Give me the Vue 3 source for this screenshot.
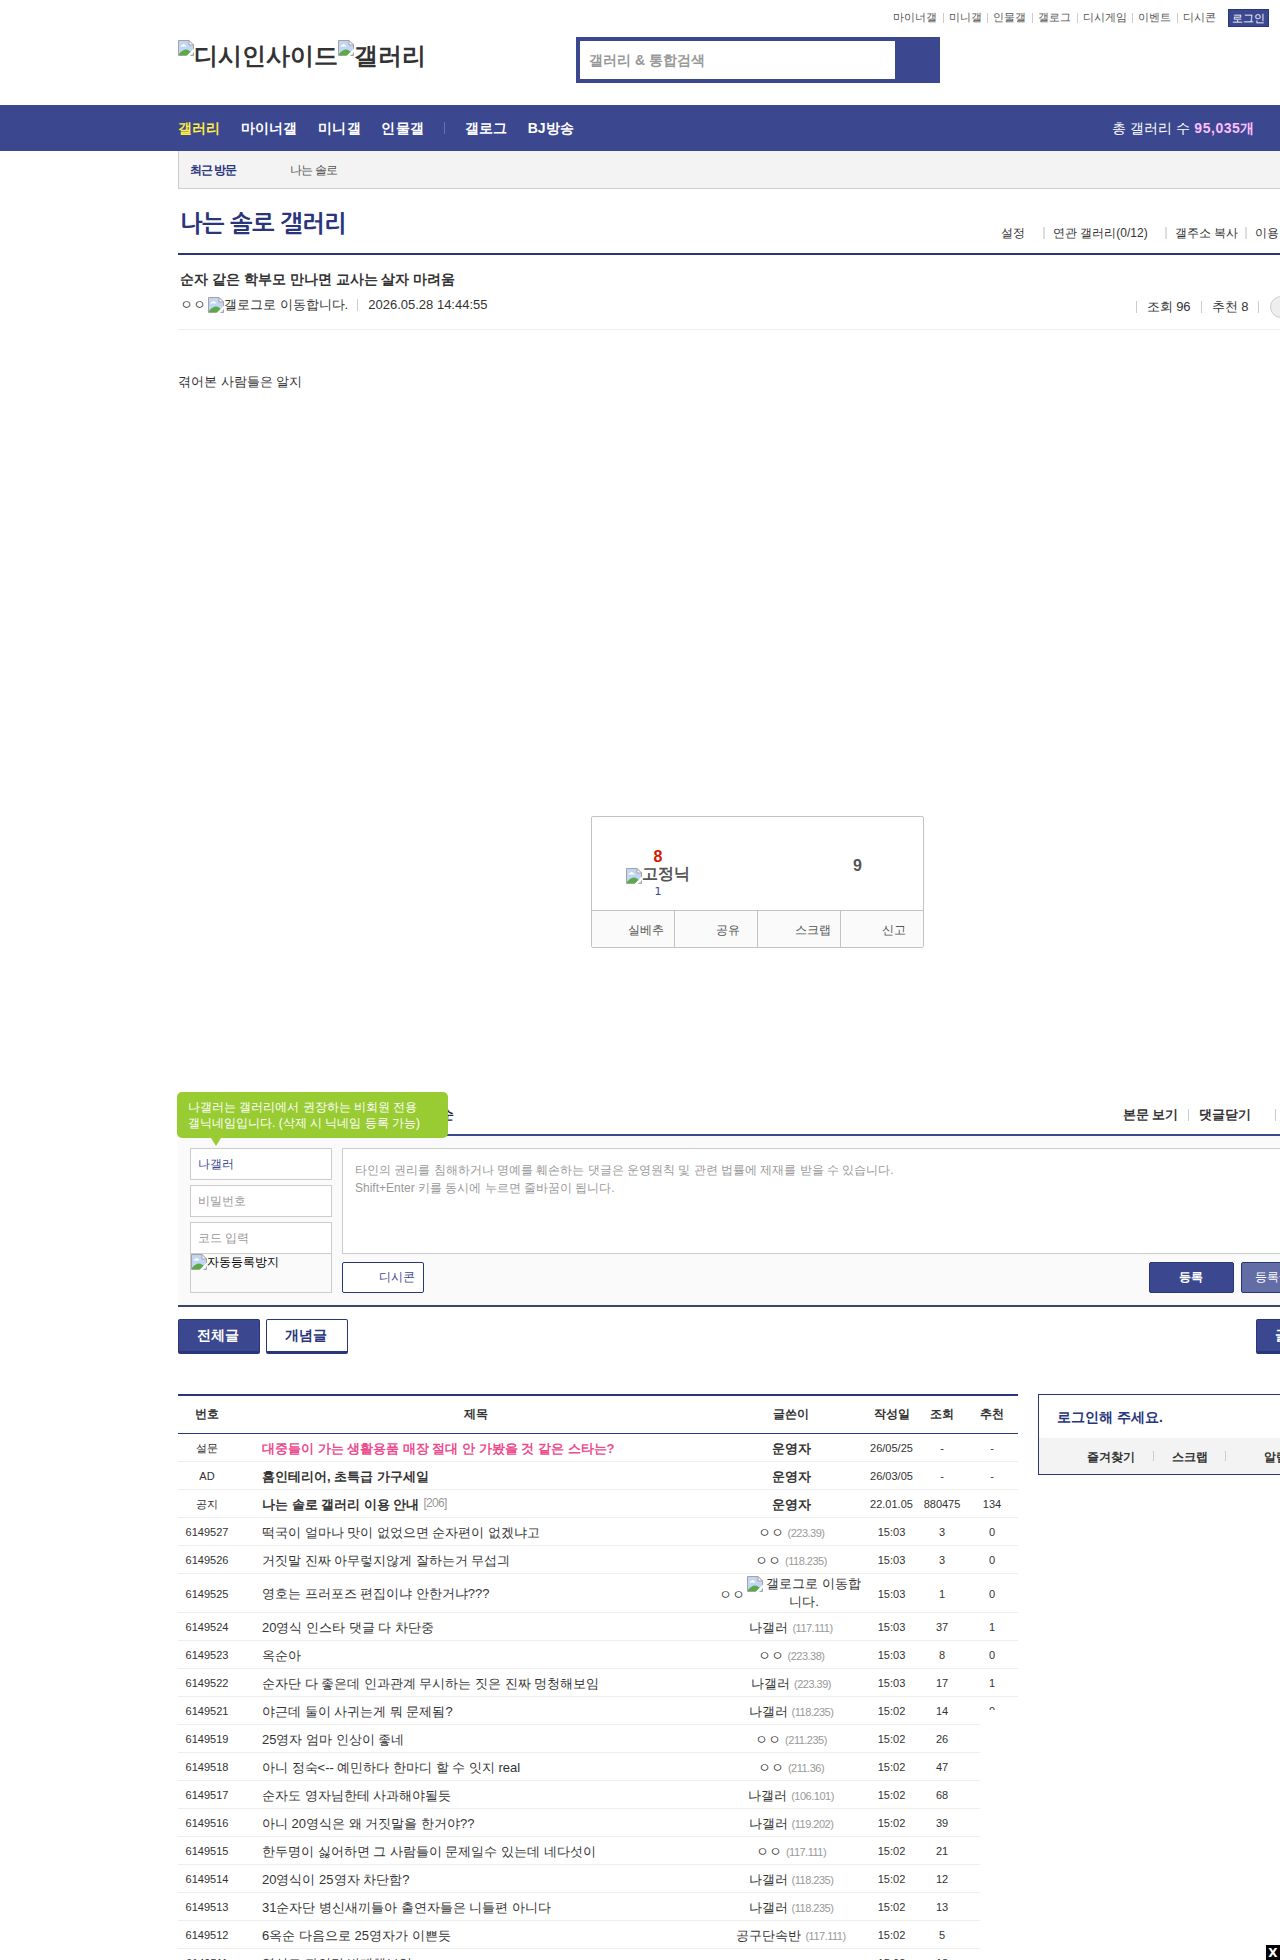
<script setup>
import { h } from 'vue'

const BrokenImage = () =>
  h('svg', { width: 16, height: 16, viewBox: '0 0 16 16' }, [
    h('path', { d: 'M.5 .5H11L15.5 5V15.5H.5Z', fill: '#c3d5f4', stroke: '#a3a3a3' }),
    h('path', { d: 'M2.5 6.5C2.5 5 4 5 4.300 5C4.600 3.500 6.500 3.500 7 5C8.500 5 8.500 6.500 8 6.500Z', fill: '#fff' }),
    h('path', { d: 'M1 15V14C3 11 6 9.500 8 9.500S12 11 13 12L10 15Z', fill: '#5aaa45' }),
    h('path', { d: 'M8.500 16L16 8.500V12L12 16Z', fill: '#fff' }),
    h('path', { d: 'M11 .5V5H15.500Z', fill: '#fff', stroke: '#a3a3a3' })
  ])

const topLinks = ['마이너갤', '미니갤', '인물갤', '갤로그', '디시게임', '이벤트', '디시콘']

const rows = [
  { no: '설문', title: '대중들이 가는 생활용품 매장 절대 안 가봤을 것 같은 스타는?', nick: '운영자', date: '26/05/25', views: '-', up: '-', notice: true, hot: true },
  { no: 'AD', title: '홈인테리어, 초특급 가구세일', nick: '운영자', date: '26/03/05', views: '-', up: '-', notice: true },
  { no: '공지', title: '나는 솔로 갤러리 이용 안내', replies: '[206]', nick: '운영자', date: '22.01.05', views: '880475', up: '134', notice: true },
  { no: '6149527', title: '떡국이 얼마나 맛이 없었으면 순자편이 없겠냐고', nick: 'ㅇㅇ', ip: '(223.39)', date: '15:03', views: '3', up: '0' },
  { no: '6149526', title: '거짓말 진짜 아무렇지않게 잘하는거 무섭긔', nick: 'ㅇㅇ', ip: '(118.235)', date: '15:03', views: '3', up: '0' },
  { no: '6149525', title: '영호는 프러포즈 편집이냐 안한거냐???', nick: 'ㅇㅇ', gallog: true, date: '15:03', views: '1', up: '0' },
  { no: '6149524', title: '20영식 인스타 댓글 다 차단중', nick: '나갤러', ip: '(117.111)', date: '15:03', views: '37', up: '1' },
  { no: '6149523', title: '옥순아', nick: 'ㅇㅇ', ip: '(223.38)', date: '15:03', views: '8', up: '0' },
  { no: '6149522', title: '순자단 다 좋은데 인과관계 무시하는 짓은 진짜 멍청해보임', nick: '나갤러', ip: '(223.39)', date: '15:03', views: '17', up: '1' },
  { no: '6149521', title: '야근데 둘이 사귀는게 뭐 문제됨?', nick: '나갤러', ip: '(118.235)', date: '15:02', views: '14', up: '0' },
  { no: '6149519', title: '25영자 엄마 인상이 좋네', nick: 'ㅇㅇ', ip: '(211.235)', date: '15:02', views: '26', up: '0' },
  { no: '6149518', title: '아니 정숙<-- 예민하다 한마디 할 수 잇지 real', nick: 'ㅇㅇ', ip: '(211.36)', date: '15:02', views: '47', up: '0' },
  { no: '6149517', title: '순자도 영자님한테 사과해야될듯', nick: '나갤러', ip: '(106.101)', date: '15:02', views: '68', up: '0' },
  { no: '6149516', title: '아니 20영식은 왜 거짓말을 한거야??', nick: '나갤러', ip: '(119.202)', date: '15:02', views: '39', up: '0' },
  { no: '6149515', title: '한두명이 싫어하면 그 사람들이 문제일수 있는데 네다섯이', nick: 'ㅇㅇ', ip: '(117.111)', date: '15:02', views: '21', up: '0' },
  { no: '6149514', title: '20영식이 25영자 차단함?', nick: '나갤러', ip: '(118.235)', date: '15:02', views: '12', up: '0' },
  { no: '6149513', title: '31순자단 병신새끼들아 출연자들은 니들편 아니다', nick: '나갤러', ip: '(118.235)', date: '15:02', views: '13', up: '0' },
  { no: '6149512', title: '6옥순 다음으로 25영자가 이쁜듯', nick: '공구단속반', ip: '(117.111)', date: '15:02', views: '5', up: '0' },
  { no: '6149511', title: '영식도 과언만 반개했보임', nick: 'ㅇㅇ', ip: '', date: '15:02', views: '18', up: '0' }
]
</script>

<template>
  <div class="page">
    <header class="head">
      <h1 class="logo"><BrokenImage /><span>디시인사이드</span><BrokenImage /><span>갤러리</span></h1>
      <div class="search"><div class="field">갤러리 &amp; 통합검색</div></div>
      <div class="util">
        <span v-for="t in topLinks" :key="t" class="ul">{{ t }}</span>
        <span class="login">로그인</span>
      </div>
    </header>

    <nav class="gnb">
      <b class="on">갤러리</b><b>마이너갤</b><b>미니갤</b><b>인물갤</b><i class="bar"></i><b>갤로그</b><b>BJ방송</b>
      <span class="total">총 갤러리 수 <em>95,035개</em></span>
    </nav>

    <main class="wrap">
      <div class="recent"><b>최근 방문</b><span>나는 솔로</span></div>

      <div class="ghead">
        <h2>나는 솔로 갤러리</h2>
        <div class="gopts">
          <span class="o1">설정</span><span class="o2">연관 갤러리(0/12)</span><span class="o3">갤주소 복사</span><span class="o4">이용안내</span>
        </div>
      </div>

      <article>
        <div class="phead">
          <h3>순자 같은 학부모 만나면 교사는 살자 마려움</h3>
          <div class="meta">
            <span class="who">ㅇㅇ</span><BrokenImage /><span class="alt">갤로그로 이동합니다.</span><i class="sep"></i><span>2026.05.28 14:44:55</span>
            <div class="stats"><i class="sep"></i><span>조회 96</span><i class="sep"></i><span>추천 8</span><i class="sep"></i><i class="pill"></i></div>
          </div>
        </div>
        <p class="body">겪어본 사람들은 알지</p>

        <div class="vote">
          <div class="counts">
            <div class="upv">
              <b class="red">8</b>
              <b class="fix"><BrokenImage />고정닉</b>
              <span class="one">1</span>
            </div>
            <b class="down">9</b>
          </div>
          <div class="acts"><span class="a1">실베추</span><span class="a2">공유</span><span class="a3">스크랩</span><span class="a4">신고</span></div>
        </div>
      </article>

      <section class="cmt">
        <div class="chead">
          <div class="cleft"><span class="order">등록순</span></div>
          <b>본문 보기</b><i class="sep"></i><b>댓글닫기</b><i class="sep far"></i>
          <div class="tip">나갤러는 갤러리에서 권장하는 비회원 전용<br>갤닉네임입니다. (삭제 시 닉네임 등록 가능)</div>
        </div>
        <div class="cform">
          <div class="ids">
            <div class="inp name">나갤러</div>
            <div class="inp">비밀번호</div>
            <div class="inp code">코드 입력</div>
            <div class="captcha"><BrokenImage />자동등록방지</div>
          </div>
          <div class="write">
            <div class="area">타인의 권리를 침해하거나 명예를 훼손하는 댓글은 운영원칙 및 관련 법률에 제재를 받을 수 있습니다.<br>Shift+Enter 키를 동시에 누르면 줄바꿈이 됩니다.</div>
            <div class="btns"><span class="dccon">디시콘</span><b class="send">등록</b><span class="send2">등록+추천</span></div>
          </div>
        </div>
      </section>

      <div class="tabs"><b class="tab fill">전체글</b><b class="tab">개념글</b><b class="tab fill wr">글쓰기</b></div>

      <div class="cols">
        <section class="list">
          <div class="row th"><span>번호</span><span>제목</span><span>글쓴이</span><span>작성일</span><span>조회</span><span>추천</span></div>
          <div v-for="r in rows" :key="r.no" class="row" :class="{ notice: r.notice, hot: r.hot, tall: r.gallog }">
            <span class="s">{{ r.no }}</span>
            <span class="t">{{ r.title }}<em v-if="r.replies">{{ r.replies }}</em></span>
            <span v-if="r.gallog" class="w gallog"><span>{{ r.nick }}</span><span class="wrapalt"><BrokenImage /> 갤로그로 이동합니다.</span></span>
            <span v-else class="w">{{ r.nick }}<em v-if="r.ip">{{ r.ip }}</em></span>
            <span class="s">{{ r.date }}</span>
            <span class="s">{{ r.views }}</span>
            <span class="s">{{ r.up }}</span>
          </div>
        </section>
        <aside class="box">
          <b class="ask">로그인해 주세요.</b>
          <div class="mine"><b>즐겨찾기</b><i></i><b>스크랩</b><i></i><b class="al">알림</b></div>
        </aside>
      </div>
    </main>
    <div class="ad"><span class="x">X</span></div>
  </div>
</template>

<style>
body { margin: 0; overflow: hidden; }
</style>
<style scoped>
.page { position: relative; width: 1280px; height: 1960px; overflow: hidden; background: #fff; color: #333; font: 12px/16px "Liberation Sans", sans-serif; white-space: nowrap; }
h1, h2, h3, p { margin: 0; }
em, i { font-style: normal; }
svg { flex: none; display: block; }

.head { display: flex; height: 105px; padding-left: 178px; }
.logo { display: flex; width: 398px; margin-top: 40px; font-size: 24px; line-height: 31px; height: 31px; }
.logo span { margin-right: 1px; }
.logo span:first-of-type { margin-right: 0; }
.search { box-sizing: border-box; width: 364px; height: 46px; margin-top: 37px; padding: 4px; background: #3b4890; flex: none; }
.field { width: 306px; height: 38px; padding-left: 9px; background: #fff; color: #999; font: bold 14px/38px "Liberation Sans", sans-serif; }
.util { position: absolute; right: 11px; top: 9px; display: flex; align-items: flex-start; height: 18px; color: #555; font-size: 11px; line-height: 17px; }
.ul { display: flex; align-items: center; }
.ul + .ul::before { content: ""; width: 1px; height: 10px; margin: 0 5px 0 5.7px; background: #ccc; }
.login { height: 16px; line-height: 17px; padding: 0 3px; margin-left: 12px; border: 1px solid #29367c; background: #3b4890; color: #fff; }

.gnb { display: flex; align-items: center; height: 46px; padding-left: 178px; background: #3b4890; color: #fff; font-size: 14px; }
.gnb b { margin-right: 20.8px; letter-spacing: .1px; }
.gnb .on { color: #ffed43; }
.bar { width: 1px; height: 12px; margin: 0 20px 0 -1px; background: #6671ab; }
.total { margin-left: auto; margin-right: 25px; letter-spacing: .1px; }
.total em { color: #ffbdff; font-weight: bold; letter-spacing: .55px; }

.wrap { width: 1160px; margin-left: 178px; }
.recent { display: flex; align-items: center; height: 37px; border: solid #ccc; border-width: 0 0 1px 1px; background: #f3f3f3; color: #555; letter-spacing: -.8px; }
.recent b { width: 100px; margin-left: 11px; color: #29367c; letter-spacing: -1px; }
.ghead { position: relative; height: 64px; border-bottom: 2px solid #29367c; }
h2 { padding: 18px 0 0 2px; color: #29367c; font: bold 24px/34px NanumGothic, "Liberation Sans", sans-serif; letter-spacing: -.6px; }
.gopts { position: absolute; left: 823px; top: 36px; display: flex; }
.gopts span { display: flex; align-items: center; }
.gopts span + span::before { content: ""; width: 2px; height: 12px; margin-right: 8px; background: #ddd; }
.gopts .o1 { width: 42px; }
.gopts .o2 { width: 122px; }
.gopts .o3 { width: 80px; }

.phead { height: 74px; border-bottom: 1px solid #eee; }
h3 { padding: 15px 0 1px 2px; font-size: 14px; line-height: 18px; }
.meta { display: flex; align-items: center; padding-left: 2px; height: 32px; font-size: 13px; }
.who { width: 28px; }
.meta > svg { margin-left: 2px; }
.sep { width: 1px; height: 12px; margin: 0 10px; background: #ccc; flex: none; }
.meta > .sep { margin-left: 9px; }
.stats { display: flex; align-items: center; position: relative; top: 2px; margin-left: 638px; }
.pill { width: 80px; height: 20px; border: 1px solid #ccc; border-radius: 11px; background: #eee; flex: none; margin-left: 1px; }
.body { height: 442px; padding-top: 44px; font-size: 13px; line-height: 16px; }

.vote { box-sizing: border-box; width: 333px; height: 132px; margin: 0 0 0 413px; border: 1px solid #c3c3c3; border-radius: 2px; }
.counts { display: flex; height: 93px; color: #555; font-size: 16px; }
.upv { display: flex; flex: none; flex-direction: column; align-items: center; width: 132px; padding-top: 31px; line-height: 18px; }
.red { color: #d31900; }
.fix { display: flex; height: 17px; line-height: 15px; }
.fix svg { margin-top: 2px; }
.one { color: #3b4890; font: 11px/18px "DejaVu Sans", sans-serif; }
.down { padding: 41px 0 0 129px; }
.acts { display: flex; height: 36px; border-top: 1px solid #c3c3c3; background: #fafafa; color: #555; line-height: 38px; }
.acts span { box-sizing: border-box; width: 83px; border-right: 1px solid #c3c3c3; }
.acts .a1 { padding-left: 36px; }
.acts .a2 { padding-left: 41px; }
.acts .a3 { padding-left: 37px; }
.acts .a4 { padding-left: 41px; width: 82px; border: 0; }

.cmt { margin-top: 148px; }
.chead { position: relative; display: flex; align-items: center; height: 38px; border-bottom: 2px solid #3b4890; font-size: 13px; }
.cleft { width: 944.5px; }
.order { display: block; width: 276px; text-align: right; font-weight: bold; }
.chead .sep { margin: 0 10px 0 9.5px; }
.chead .far { margin-left: 24px; }
.tip { position: absolute; left: -1px; top: -4px; box-sizing: border-box; width: 271px; height: 46px; padding: 7px 11px; border-radius: 5px; background: #99cc33; color: #fff; font-size: 12px; line-height: 16px; }
.tip::after { content: ""; position: absolute; left: 34px; top: 46px; border: 5px solid transparent; border-top: 8px solid #99cc33; border-bottom: 0; }
.cform { display: flex; height: 157px; padding: 12px 0 0 12px; border-bottom: 2px solid #3b4470; background: #fafafa; }
.ids { width: 152px; }
.inp { box-sizing: border-box; width: 142px; height: 32px; padding-left: 7px; margin-bottom: 5px; border: 1px solid #ccc; background: #fff; color: #999; line-height: 31px; }
.name { color: #3b4890; }
.code { margin: 0; }
.captcha { display: flex; box-sizing: border-box; width: 142px; height: 39px; border: 1px solid #ccc; border-top: 0; color: #000; }
.write { width: 990px; flex: none; }
.area { box-sizing: border-box; height: 106px; padding: 12px; border: 1px solid #ccc; background: #fff; color: #999; line-height: 18px; }
.btns { display: flex; margin-top: 8px; line-height: 29px; }
.btns > * { box-sizing: border-box; height: 31px; border: 1px solid #29367c; border-radius: 2px; }
.dccon { width: 82px; padding-left: 36px; background: #fff; color: #3b4890; }
.send { width: 85px; margin: 0 7px 0 725px; padding-right: 1px; background: #3b4890; color: #fff; text-align: center; }
.send2 { width: 85px; padding-left: 13px; background: #626da6; color: #fff; }

.tabs { display: flex; height: 75px; padding-top: 12px; }
.tab { box-sizing: border-box; width: 82px; height: 35px; margin-right: 6px; padding-right: 2px; border: 1px solid #29367c; border-bottom-width: 3px; border-radius: 2px; color: #29367c; font-size: 14px; line-height: 31px; text-align: center; flex: none; }
.fill { background: #3b4890; color: #fff; }
.wr { margin-left: 902px; }

.cols { display: flex; }
.list { width: 840px; border-top: 2px solid #29367c; flex: none; }
.row { display: grid; grid-template-columns: 58px 480px 150px 51px 50px 51px; height: 27px; border-bottom: 1px solid #eee; align-items: center; text-align: center; font-size: 13px; line-height: 18px; }
.th { height: 37px; border-color: #29367c; font-size: 12px; font-weight: bold; }
.th span { padding-bottom: 1px; }
.th span:last-child, .s:last-child { padding-right: 1px; }
.s { font-size: 11px; padding-top: 1px; }
.row .t { padding: 2px 0 0 26px; text-align: left; }
.w { padding-top: 2px; }
.w em { margin-left: 4px; color: #999; font-size: 11px; letter-spacing: -.5px; }
.notice .t, .notice .w { font-weight: bold; }
.hot .t { color: #ed4b8d; }
.t em { position: relative; top: -2px; margin-left: 4px; color: #999; font-size: 12px; font-weight: normal; letter-spacing: -.7px; }
.tall { height: 38px; }
.tall .w { display: flex; align-items: center; padding: 0; }
.tall .w > span:first-child { margin: 4px 0 0 2px; width: 28px; }
.wrapalt { width: 116px; flex: none; white-space: normal; word-break: break-all; }
.wrapalt svg { display: inline-block; vertical-align: -4px; }

.box { box-sizing: border-box; width: 300px; height: 81px; margin-left: 20px; border: 1px solid #29367c; flex: none; }
.ask { display: block; height: 43px; padding-left: 18px; color: #29367c; font-size: 14px; line-height: 45px; }
.mine { display: flex; align-items: center; height: 36px; padding-left: 48px; background: #f3f3f3; }
.mine b { padding-top: 1px; }
.mine i { width: 1px; height: 10px; margin: 0 18px 0 17.5px; background: #ccc; }
.mine .al { margin-left: 20px; }

.ad { position: absolute; right: 0; bottom: 0; width: 300px; height: 250px; background: #fff; }
.x { position: absolute; right: 0; bottom: 0; width: 14px; height: 15px; background: #000; color: #fff; font: bold 12px/16px "DejaVu Sans", sans-serif; text-align: center; }
</style>
